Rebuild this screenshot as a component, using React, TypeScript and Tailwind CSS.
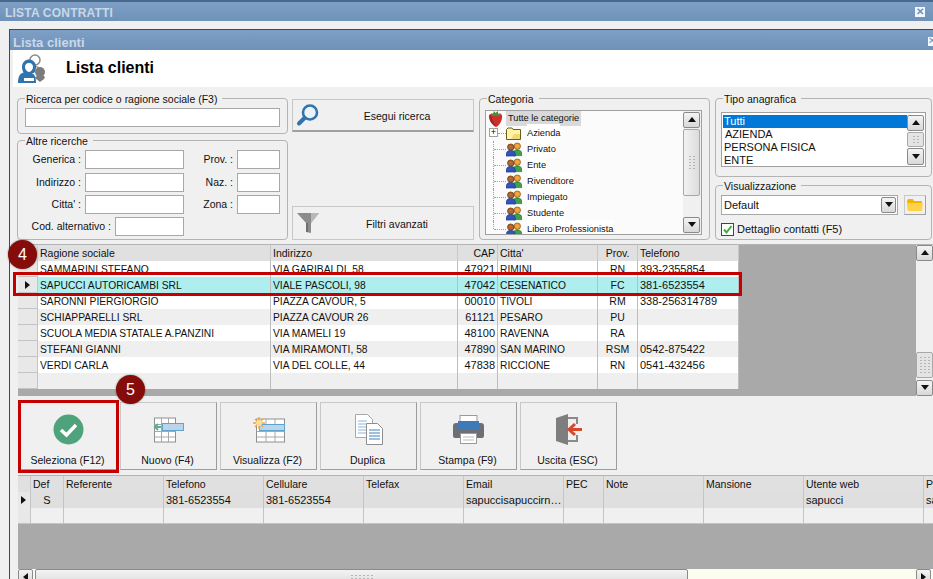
import type { ReactNode } from 'react';

const clienti = [
  ['SAMMARINI STEFANO', 'VIA GARIBALDI, 58', '47921', 'RIMINI', 'RN', '393-2355854'],
  ['SAPUCCI AUTORICAMBI SRL', 'VIALE PASCOLI, 98', '47042', 'CESENATICO', 'FC', '381-6523554'],
  ['SARONNI PIERGIORGIO', 'PIAZZA CAVOUR, 5', '00010', 'TIVOLI', 'RM', '338-256314789'],
  ['SCHIAPPARELLI SRL', 'PIAZZA CAVOUR 26', '61121', 'PESARO', 'PU', ''],
  ['SCUOLA MEDIA STATALE A.PANZINI', 'VIA MAMELI 19', '48100', 'RAVENNA', 'RA', ''],
  ['STEFANI GIANNI', 'VIA MIRAMONTI, 58', '47890', 'SAN MARINO', 'RSM', '0542-875422'],
  ['VERDI CARLA', 'VIA DEL COLLE, 44', '47838', 'RICCIONE', 'RN', '0541-432456'],
  ['', '', '', '', '', ''],
];

const rowBg = ['bg-white', 'bg-[#aeeeee]', 'bg-white', 'bg-[#efefef]', 'bg-white', 'bg-[#efefef]', 'bg-white', 'bg-[#efefef]'];
const categorie = ['Privato', 'Ente', 'Rivenditore', 'Impiegato', 'Studente', 'Libero Professionista'];
const mainCols = 'grid grid-cols-[20px_233px_187px_40px_100px_40px_101px] w-[721px] h-4';
const lowerCols = 'grid grid-cols-[13px_33px_100px_100px_100px_100px_100px_40px_100px_100px_120px_100px] w-[1006px] h-4';

function Triangle({ dir }: { dir: 'up' | 'down' | 'left' | 'right' }) {
  const points = { up: '4,1 8,6 0,6', down: '0,1 8,1 4,6', left: '6,0 6,8 1,4', right: '1,0 1,8 6,4' }[dir];
  return (
    <svg width="8" height="8" viewBox="0 0 8 8">
      <polygon points={points} fill="#111" />
    </svg>
  );
}

function ScrollBtn({ dir, className }: { dir: 'up' | 'down' | 'left' | 'right'; className: string }) {
  return (
    <div className={`flex shrink-0 items-center justify-center rounded-[2px] border border-[#8a8a8a] bg-gradient-to-b from-[#f4f4f4] to-[#d8d8d8] ${className}`}>
      <Triangle dir={dir} />
    </div>
  );
}

function Grip({ cols, rows }: { cols: number; rows: number }) {
  return (
    <svg width={cols * 4} height={rows * 3} className="shrink-0">
      {Array.from({ length: cols * rows }).map((_, i) => (
        <rect key={i} x={(i % cols) * 4 + 1} y={Math.floor(i / cols) * 3 + 1} width="2" height="1" fill="#b4b4b4" />
      ))}
    </svg>
  );
}

function GroupBox({ title, className, legendClass = 'ml-[7px]', children }: { title: string; className: string; legendClass?: string; children: ReactNode }) {
  return (
    <fieldset className={`rounded-[4px] border border-[#b4b4b4] ${className}`}>
      <legend className={`translate-y-px pl-px pr-[5px] leading-3 ${legendClass}`}>{title}</legend>
      {children}
    </fieldset>
  );
}

function Input({ className }: { className: string }) {
  return <div className={`h-[19px] shrink-0 border border-[#a8a8a8] bg-white ${className}`} />;
}

function SearchRow({ label, inputW, side, className = '' }: { label: string; inputW: string; side?: string; className?: string }) {
  return (
    <div className={`flex items-center ${className}`}>
      <div className="flex w-[159px] items-center justify-end gap-1">
        <span className="mb-[2px]">{label} :</span>
        <Input className={inputW} />
      </div>
      {side && (
        <div className="flex w-[96px] items-center justify-end gap-1">
          <span className="mb-[2px]">{side} :</span>
          <Input className="w-[43px]" />
        </div>
      )}
    </div>
  );
}

function ClientsIcon() {
  return (
    <svg width="32" height="32" viewBox="0 0 32 32">
      <circle cx="20" cy="7" r="5" fill="#fff" stroke="#8a8a8a" strokeWidth="1.5" />
      <path d="M14 15c2-2 8-2 10 0" fill="none" stroke="#8a8a8a" strokeWidth="1.5" />
      <circle cx="25" cy="19" r="5" fill="#7c7c7c" />
      <path d="M20 25c1-3 8-3 10-1l-1 2-4 3z" fill="#7c7c7c" />
      <path d="M3 30c0-7 2-10 7-11h4c5 1 7 4 7 11z" fill="#2f74ae" />
      <path d="M7 14c0-10 14-10 14 0 0 3-1 5-2 6H9c-1-1-2-3-2-6z" fill="#2f74ae" />
      <path d="M10 14c0-2 1-4 4-4s4 2 4 4-2 5-4 5-4-3-4-5z" fill="#fff" />
      <path d="M9 25h10v3H9z" fill="#fff" />
    </svg>
  );
}

function Magnifier() {
  return (
    <svg width="24" height="24" viewBox="0 0 24 24">
      <circle cx="14" cy="9.500" r="7" fill="#eaf3fa" stroke="#2f74ae" strokeWidth="2.600" />
      <path d="M8.500 15 3 20.500" stroke="#2f74ae" strokeWidth="4" strokeLinecap="round" />
    </svg>
  );
}

function Funnel() {
  return (
    <svg width="24" height="24" viewBox="0 0 24 24">
      <path d="M1 2h22l-8 10v10l-5-1v-9z" fill="#8c8c8c" />
      <path d="M10 12h2v9h-2z" fill="#6e6e6e" />
      <path d="M15 2h8l-8 10z" fill="#b8b8b8" />
    </svg>
  );
}

function Strawberry() {
  return (
    <svg width="15" height="17" viewBox="0 0 15 17">
      <path d="M1 5c2-2 11-2 13 0 1 5-3 11-6 12C5 16 0 10 1 5z" fill="#c9322d" />
      <path d="M3 5c1 4 2 7 5 11-4-1-7-6-6-10z" fill="#a52421" />
      <path d="M3 3l2 1 1-3 1.500 2L10 1v3l3-1-2 3H4z" fill="#4f8a3a" />
    </svg>
  );
}

function FolderSmall() {
  return (
    <svg width="15" height="13" viewBox="0 0 15 13" className="shrink-0">
      <path d="M.5 2.500 2 1h4l1 1.500h7.500v10H.5z" fill="#fff3a8" stroke="#6b5c14" />
      <path d="M8 7h6v5H5z" fill="#f0d878" />
    </svg>
  );
}

function PeopleIcon() {
  return (
    <svg width="16" height="15" viewBox="0 0 17 15" className="shrink-0">
      <circle cx="12" cy="4" r="3.400" fill="#f2a33c" stroke="#6e4210" strokeWidth=".7" />
      <path d="M7 14c0-5 2-6 5-6s5 1 5 6z" fill="#3ea04a" stroke="#1d5c25" strokeWidth=".6" />
      <circle cx="5" cy="5" r="3.400" fill="#b9662a" stroke="#46250c" strokeWidth=".7" />
      <path d="M0 14.500c0-5 2-6 5-6s5 1 5 6z" fill="#2f55c0" stroke="#16286e" strokeWidth=".6" />
    </svg>
  );
}

function TreeItem({ label, index }: { label: string; index: number }) {
  return (
    <div className="flex h-4 items-center">
      <div className="relative h-4 w-[18px] shrink-0">
        <div className={`absolute left-[5px] top-0 border-l border-dotted border-[#a0a0a0] ${index === 5 ? 'h-2' : 'h-4'}`} />
        <div className="absolute left-[6px] top-2 w-[12px] border-t border-dotted border-[#a0a0a0]" />
      </div>
      <PeopleIcon />
      <span className="ml-[5px] whitespace-nowrap bg-white text-[9.250px] leading-[18px]">{label}</span>
    </div>
  );
}

function NewIcon() {
  return (
    <svg width="32" height="26" viewBox="0 0 32 26">
      <rect x="1.500" y="1" width="21" height="24" fill="#fff" stroke="#8f8f8f" />
      <path d="M1.500 7.500h21M1.500 14.500h21M1.500 20h21M8.500 1v24M15.500 1v24" stroke="#a8a8a8" />
      <rect x="9.500" y="6.500" width="21" height="7" fill="#bcd3ea" stroke="#5aa6cf" />
      <path d="M8 10H3M5 7l-3 3 3 3" fill="none" stroke="#5fae91" strokeWidth="2" />
    </svg>
  );
}

function ViewIcon() {
  return (
    <svg width="32" height="26" viewBox="0 0 32 26">
      <rect x="3.500" y="2" width="28" height="23" fill="#fff" stroke="#8f8f8f" />
      <path d="M3.500 14.500h28M3.500 20h28M13 14v11M22 14v11M13 2v6M22 2v6" stroke="#a8a8a8" />
      <rect x="6.500" y="7.500" width="25" height="6" fill="#bcd3ea" stroke="#5aa6cf" />
      <path d="M6 0v12M0 6h12M2 2l8 8M10 2l-8 8" stroke="#f0a33a" strokeWidth="1.400" />
      <circle cx="6" cy="6" r="3" fill="#fbdc9a" />
    </svg>
  );
}

function DuplicateIcon() {
  return (
    <svg width="30" height="31" viewBox="0 0 30 31">
      <path d="M1.500.5h12l5 5v18h-17z" fill="#fff" stroke="#a8a8a8" />
      <path d="M4 7h9M4 10h9M4 13h9M4 16h9M4 19h9" stroke="#8ab8e0" />
      <path d="M12.500 9.500h11l5 5v16h-16z" fill="#fff" stroke="#8f8f8f" />
      <path d="M15 16h11M15 19h11M15 22h11M15 25h11" stroke="#3f80bd" />
    </svg>
  );
}

function PrintIcon() {
  return (
    <svg width="31" height="29" viewBox="0 0 31 29">
      <rect x="7" y="0.500" width="17" height="8" fill="#fff" stroke="#9a9a9a" />
      <path d="M3 8h25a3 3 0 0 1 3 3v10a2 2 0 0 1-2 2H2a2 2 0 0 1-2-2V11a3 3 0 0 1 3-3z" fill="#6c7076" />
      <rect x="5" y="6" width="21" height="9" fill="#3f7ab8" />
      <rect x="7.500" y="18.500" width="16" height="10" fill="#fff" stroke="#9a9a9a" />
      <path d="M10 22h11M10 25h11" stroke="#bbb" />
    </svg>
  );
}

function ExitIcon() {
  return (
    <svg width="28" height="31" viewBox="0 0 28 31">
      <path d="M1 4 13 0v31L1 27z" fill="#7e7e7e" />
      <path d="M13 4h9v6M22 21v6h-9" fill="none" stroke="#8a8a8a" strokeWidth="2" />
      <path d="M27 15.500H15M20 10l-6 5.500 6 5.500" fill="none" stroke="#d8472c" strokeWidth="3" />
    </svg>
  );
}

function CheckIcon() {
  return (
    <svg width="31" height="31" viewBox="0 0 31 31">
      <circle cx="15.500" cy="15.500" r="15" fill="#4ea37c" />
      <path d="M8 16l5.500 5L23 11" fill="none" stroke="#fff" strokeWidth="3.400" />
    </svg>
  );
}

function ActionButton({ label, icon, children }: { label: string; icon: ReactNode; children?: ReactNode }) {
  return (
    <div className="relative flex h-[68px] w-[97px] shrink-0 flex-col items-center border border-[#c8c8c8] border-b-[#9c9c9c] border-r-[#9c9c9c] bg-[#f0f0f0]">
      <div className="flex h-[49px] w-full items-center justify-center pt-1">{icon}</div>
      <span className="pr-[2px] leading-4">{label}</span>
      {children}
    </div>
  );
}

function Badge({ n, className }: { n: string; className: string }) {
  return (
    <div className={`absolute z-10 flex h-[29px] w-[29px] items-center justify-center rounded-full bg-[#860b0b] text-[16px] text-white shadow-[0_0_2px_rgba(0,0,0,0.5)] ${className}`}>
      {n}
    </div>
  );
}

export default function App() {
  return (
    <div className="flex h-[579px] w-[933px] flex-col overflow-hidden bg-[#f0f0f0] text-[10.500px] leading-4 text-[#111] [font-family:'Liberation_Sans',sans-serif]">
      <div className="flex h-[21px] shrink-0 items-center justify-between border-t-2 border-[#46688c] bg-gradient-to-b from-[#7f9fc5] to-[#6e92b9] pl-[5px] pr-2 pt-[3px] text-[12px] font-bold tracking-[0.2px] text-[#c9d8e8]">
        <span>LISTA CONTRATTI</span>
        <span className="mb-[3px] flex h-[10px] w-[10px] items-center justify-center bg-[#f4f7fb] text-[10px] leading-none text-[#6e92b9]">✕</span>
      </div>

      <div className="flex min-h-0 flex-1 flex-col pt-2">
        <div className="ml-[9px] flex min-h-0 flex-1 flex-col border-l border-t border-[#3f4a57]">
          <div className="flex h-5 shrink-0 items-center justify-between bg-gradient-to-b from-[#7f9fc5] to-[#6e92b9] pl-[3px] pt-[5px] text-[13px] font-bold text-[#c9d8e8]">
            <span>Lista clienti</span>
            <span className="mb-[3px] flex h-[9px] w-[5px] items-center overflow-hidden bg-[#f4f7fb] text-[10px] font-normal leading-none text-[#6e92b9]">✕</span>
          </div>

          <div className="flex min-h-0 flex-1 flex-col pl-[3px]">
            <div className="flex h-[37px] shrink-0 items-center bg-white pl-[2px]">
              <ClientsIcon />
              <h1 className="mb-[2px] ml-[19px] text-[16px] font-bold text-black">Lista clienti</h1>
            </div>

            <div className="flex h-[153px] shrink-0 gap-0 pl-1 pt-[5px]">
              <div className="flex w-[271px] shrink-0 flex-col">
                <GroupBox title="Ricerca per codice o ragione sociale (F3)" legendClass="ml-0" className="h-[42px] px-[7px]">
                  <Input className="mt-1 w-[255px]" />
                </GroupBox>
                <GroupBox title="Altre ricerche" legendClass="ml-0" className="h-[106px] px-[7px]">
                  <div className="mt-1 flex flex-col gap-[3px]">
                    <SearchRow label="Generica" inputW="w-[99px]" side="Prov." className="mb-px" />
                    <SearchRow label="Indirizzo" inputW="w-[99px]" side="Naz." />
                    <SearchRow label="Citta'" inputW="w-[99px]" side="Zona" />
                    <SearchRow label="Cod. alternativo" inputW="w-[69px]" />
                  </div>
                </GroupBox>
              </div>

              <div className="ml-1 flex h-[148px] w-[182px] shrink-0 flex-col justify-between pt-[7px]">
                <div className="flex h-[33px] items-center border border-[#c8c8c8] border-b-2 border-b-[#a0a0a0] pl-[3px]">
                  <Magnifier />
                  <span className="ml-[32px] mt-[2px] w-[90px] text-center">Esegui ricerca</span>
                </div>
                <div className="flex h-[34px] items-center border border-[#c8c8c8] pl-[3px]">
                  <Funnel />
                  <span className="ml-[32px] mt-[2px] w-[90px] text-center">Filtri avanzati</span>
                </div>
              </div>

              <GroupBox title="Categoria" className="ml-[5px] h-[148px] w-[231px] shrink-0">
                <div className="ml-[5px] mt-[6px] flex h-[125px] w-[217px] overflow-hidden border border-[#a0a0a0] bg-[#fbfbfb]">
                  <div className="min-w-0 flex-1 overflow-hidden pl-[2px]">
                    <div className="flex h-[14px] items-center">
                      <Strawberry />
                      <span className="ml-[3px] bg-[#d9d9d9] pl-[2px] pr-[2px] text-[9.250px]">Tutte le categorie</span>
                    </div>
                    <div className="flex h-4 items-center">
                      <div className="relative h-4 w-[18px] shrink-0">
                        <div className="absolute left-[1px] top-[3px] flex h-[9px] w-[9px] items-center justify-center border border-[#a0a0a0] bg-white text-[9px] leading-none text-black">+</div>
                        <div className="absolute left-[10px] top-2 w-[8px] border-t border-dotted border-[#a0a0a0]" />
                      </div>
                      <FolderSmall />
                      <span className="ml-[6px] bg-white text-[9.250px] leading-[18px]">Azienda</span>
                    </div>
                    {categorie.map((c, i) => (
                      <TreeItem key={c} label={c} index={i} />
                    ))}
                  </div>
                  <div className="flex w-[18px] shrink-0 flex-col bg-[#f0f0f0] py-px pr-px">
                    <ScrollBtn dir="up" className="h-4" />
                    <div className="mt-px flex h-[68px] items-center justify-center rounded-[2px] border border-[#a8a8a8] bg-gradient-to-r from-[#f2f2f2] to-[#dcdcdc]">
                      <Grip cols={2} rows={5} />
                    </div>
                    <ScrollBtn dir="down" className="mt-[21px] h-4" />
                  </div>
                </div>
              </GroupBox>

              <div className="ml-[5px] flex w-[217px] shrink-0 flex-col">
                <GroupBox title="Tipo anagrafica" className="h-[85px]">
                  <div className="ml-[5px] mt-2 flex h-[55px] w-[205px] border border-[#a0a0a0] bg-white p-px text-[11px]">
                    <div className="min-w-0 flex-1 pt-px leading-[13px]">
                      <div className="bg-[#0078d7] pl-[1px] text-white">Tutti</div>
                      <div className="pl-[2px]">AZIENDA</div>
                      <div className="pl-[1px]">PERSONA FISICA</div>
                      <div className="pl-[1px]">ENTE</div>
                    </div>
                    <div className="flex w-[17px] shrink-0 flex-col gap-px pt-px">
                      <ScrollBtn dir="up" className="h-4" />
                      <div className="flex h-4 items-center justify-center rounded-[2px] border border-[#a8a8a8] bg-[#e4e4e4]">
                        <Grip cols={2} rows={3} />
                      </div>
                      <ScrollBtn dir="down" className="h-[17px]" />
                    </div>
                  </div>
                </GroupBox>
                <GroupBox title="Visualizzazione" className="mt-[2px] h-[61px]">
                  <div className="ml-[5px] mt-1 flex items-center text-[11px]">
                    <div className="flex h-5 w-[177px] items-center justify-between border border-[#a8a8a8] bg-white pl-[2px] pr-px">
                      <span>Default</span>
                      <ScrollBtn dir="down" className="h-4 w-[15px]" />
                    </div>
                    <div className="ml-[6px] flex h-5 w-[22px] items-center justify-center border border-[#c8c8c8] border-b-[#a0a0a0] border-r-[#a0a0a0]">
                      <svg width="16" height="12" viewBox="0 0 16 12">
                        <path d="M0 2 1 0h5l1 2h8v10H1z" fill="#f4b400" />
                        <path d="M0 4h16l-1 8H1z" fill="#ffd24a" />
                      </svg>
                    </div>
                  </div>
                  <div className="ml-[5px] mt-[6px] flex items-center gap-[3px] text-[11px]">
                    <div className="flex h-[13px] w-[13px] items-center justify-center border border-[#2b4a6b] bg-white">
                      <svg width="11" height="11" viewBox="0 0 11 11">
                        <path d="M2 5.500 4.500 8.500 9.500 2" fill="none" stroke="#3bae3b" strokeWidth="2" />
                      </svg>
                    </div>
                    <span>Dettaglio contatti (F5)</span>
                  </div>
                </GroupBox>
              </div>
            </div>

            <div className="relative ml-[5px] mt-[4px] flex h-[152px] shrink-0 border-t border-[#b4b4b4] bg-[#a9a9a9]">
              <div className="flex min-w-0 flex-1 flex-col">
                <div className={`${mainCols} bg-[#e0e0e0]`}>
                  <div className="border-r border-[#d0d0d0]" />
                  <div className="border-r border-[#c8c8c8] pl-[2px]">Ragione sociale</div>
                  <div className="border-r border-[#c8c8c8] pl-[2px]">Indirizzo</div>
                  <div className="border-r border-[#c8c8c8] pr-[2px] text-right">CAP</div>
                  <div className="border-r border-[#c8c8c8] pl-[2px]">Citta'</div>
                  <div className="border-r border-[#c8c8c8] text-center">Prov.</div>
                  <div className="border-r border-[#c8c8c8] pl-[2px]">Telefono</div>
                </div>
                {clienti.map((r, i) => (
                  <div key={i} className={`${mainCols} ${rowBg[i]} text-[11px]`}>
                    <div className="flex items-center justify-center border-b border-r border-[#c4c4c4] bg-[#e8e8e8]">
                      {i === 1 && <Triangle dir="right" />}
                    </div>
                    <div className="overflow-hidden whitespace-nowrap border-r border-[#bdbdbd] pl-[2px] text-[10.250px] leading-[18px]">{r[0]}</div>
                    <div className="overflow-hidden whitespace-nowrap border-r border-[#bdbdbd] pl-[2px] text-[10.250px] leading-[18px]">{r[1]}</div>
                    <div className="border-r border-[#bdbdbd] pr-[2px] text-right">{r[2]}</div>
                    <div className="overflow-hidden whitespace-nowrap border-r border-[#bdbdbd] pl-[2px] text-[10.250px] leading-[18px]">{r[3]}</div>
                    <div className="border-r border-[#bdbdbd] text-center text-[10.500px]">{r[4]}</div>
                    <div className="border-r border-[#bdbdbd] pl-[2px]">{r[5]}</div>
                  </div>
                ))}
              </div>
              <div className="flex w-[17px] shrink-0 flex-col bg-[#f0f0f0]">
                <ScrollBtn dir="up" className="h-4" />
                <div className="flex-1" />
                <div className="flex h-[26px] items-center justify-center rounded-[2px] border border-[#a8a8a8] bg-[#e4e4e4]">
                  <Grip cols={3} rows={6} />
                </div>
                <ScrollBtn dir="down" className="mt-[2px] h-4" />
              </div>
              <div className="pointer-events-none absolute left-[-5px] top-[27px] h-6 w-[729px] border-[3px] border-[#c40000]" />
              <Badge n="4" className="left-[-10px] top-[-5px]" />
              <Badge n="5" className="left-[98px] top-[130px]" />
            </div>

            <div className="ml-[7px] mt-[6px] flex h-[68px] shrink-0 gap-[3px]">
              <ActionButton label="Seleziona (F12)" icon={<CheckIcon />}>
                <div className="pointer-events-none absolute left-[-3px] top-[-3px] h-[73px] w-[101px] border-[3px] border-[#c40000]" />
              </ActionButton>
              <ActionButton label="Nuovo (F4)" icon={<NewIcon />} />
              <ActionButton label="Visualizza (F2)" icon={<ViewIcon />} />
              <ActionButton label="Duplica" icon={<DuplicateIcon />} />
              <ActionButton label="Stampa (F9)" icon={<PrintIcon />} />
              <ActionButton label="Uscita (ESC)" icon={<ExitIcon />} />
            </div>

            <div className="ml-[5px] mt-[5px] flex min-h-0 flex-1 flex-col overflow-hidden border-t border-[#b4b4b4] bg-[#a9a9a9]">
              <div className={`${lowerCols} bg-[#e0e0e0]`}>
                {['', 'Def', 'Referente', 'Telefono', 'Cellulare', 'Telefax', 'Email', 'PEC', 'Note', 'Mansione', 'Utente web', 'Password'].map((h, i) => (
                  <div key={i} className="border-r border-[#c8c8c8] pl-[2px]">{h}</div>
                ))}
              </div>
              <div className={`${lowerCols} bg-[#dfdfdf] text-[11px]`}>
                <div className="flex items-center justify-center border-r border-[#c4c4c4] bg-[#e8e8e8]">
                  <Triangle dir="right" />
                </div>
                <div className="border-r border-[#c4c4c4] text-center">S</div>
                <div className="border-r border-[#c4c4c4]" />
                <div className="border-r border-[#c4c4c4] pl-[2px]">381-6523554</div>
                <div className="border-r border-[#c4c4c4] pl-[2px]">381-6523554</div>
                <div className="border-r border-[#c4c4c4]" />
                <div className="truncate border-r border-[#c4c4c4] pl-[2px]">sapuccisapuccirn@libero.it</div>
                <div className="border-r border-[#c4c4c4]" />
                <div className="border-r border-[#c4c4c4]" />
                <div className="border-r border-[#c4c4c4]" />
                <div className="border-r border-[#c4c4c4] pl-[2px]">sapucci</div>
                <div className="pl-[2px]">sapucci</div>
              </div>
              <div className={`${lowerCols} border-b border-[#c4c4c4] bg-[#f0f0f0]`}>
                {Array.from({ length: 12 }).map((_, i) => (
                  <div key={i} className={`border-r border-[#c4c4c4] ${i === 0 ? 'bg-[#e8e8e8]' : ''}`} />
                ))}
              </div>
              <div className="flex-1" />
              <div className="flex h-[10px] shrink-0 items-start overflow-hidden bg-[#fdfcf0]">
                <ScrollBtn dir="left" className="h-4 w-[15px]" />
                <div className="ml-[2px] flex h-4 w-[653px] justify-center rounded-[2px] border border-[#8a8a8a] bg-gradient-to-b from-[#f4f4f4] to-[#dcdcdc] pt-[4px]">
                  <Grip cols={6} rows={2} />
                </div>
                <div className="flex-1" />
                <ScrollBtn dir="right" className="mr-[2px] h-4 w-[15px]" />
              </div>
            </div>
          </div>
        </div>
      </div>
    </div>
  );
}
